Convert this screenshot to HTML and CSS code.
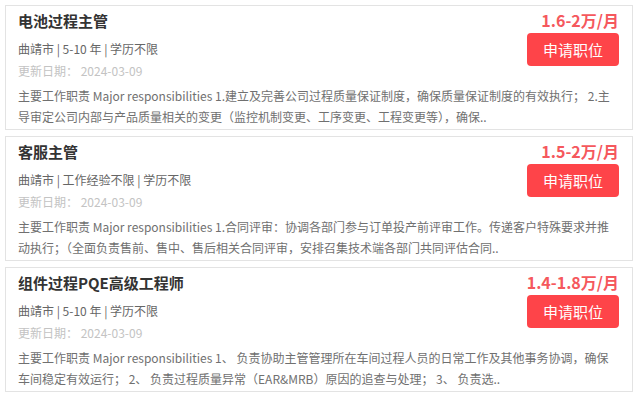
FILE: index.html
```html
<!DOCTYPE html>
<html lang="zh-CN">
<head>
    <meta charset="utf-8">
    <title>职位列表</title>
    <meta name="viewport" content="width=device-width, initial-scale=1.0">
    <link rel="stylesheet" href="styles.css">
</head>

<body>

    <div class="job-list">

        <div class="job-card">
            <div class="job-head">
                <div class="job-info">
                    <div class="job-title">电池过程主管</div>
                    <div class="job-meta">曲靖市 | 5-10 年 | 学历不限</div>
                    <div class="job-date">更新日期： 2024-03-09</div>
                </div>
                <div class="job-side">
                    <div class="job-salary">1.6-2万/月</div>
                    <button class="apply-btn">申请职位</button>
                </div>
            </div>
            <p class="job-desc">主要工作职责 Major responsibilities 1.建立及完善公司过程质量保证制度，确保质量保证制度的有效执行； 2.主导审定公司内部与产品质量相关的变更（监控机制变更、工序变更、工程变更等），确保..</p>
        </div>

        <div class="job-card">
            <div class="job-head">
                <div class="job-info">
                    <div class="job-title">客服主管</div>
                    <div class="job-meta">曲靖市 | 工作经验不限 | 学历不限</div>
                    <div class="job-date">更新日期： 2024-03-09</div>
                </div>
                <div class="job-side">
                    <div class="job-salary">1.5-2万/月</div>
                    <button class="apply-btn">申请职位</button>
                </div>
            </div>
            <p class="job-desc">主要工作职责 Major responsibilities 1.合同评审：协调各部门参与订单投产前评审工作。传递客户特殊要求并推动执行；（全面负责售前、售中、售后相关合同评审，安排召集技术端各部门共同评估合同..</p>
        </div>

        <div class="job-card">
            <div class="job-head">
                <div class="job-info">
                    <div class="job-title">组件过程PQE高级工程师</div>
                    <div class="job-meta">曲靖市 | 5-10 年 | 学历不限</div>
                    <div class="job-date">更新日期： 2024-03-09</div>
                </div>
                <div class="job-side">
                    <div class="job-salary">1.4-1.8万/月</div>
                    <button class="apply-btn">申请职位</button>
                </div>
            </div>
            <p class="job-desc">主要工作职责 Major responsibilities 1、 负责协助主管管理所在车间过程人员的日常工作及其他事务协调，确保车间稳定有效运行； 2、 负责过程质量异常（EAR&amp;MRB）原因的追查与处理； 3、 负责选..</p>
        </div>

    </div>

</body>
</html>
```

FILE: styles.css
```css
body {
    margin: 0;
    padding: 5px 5px 0 5px;
    background-color: #fff;
    font-family: "Noto Sans CJK SC", sans-serif;
}

.job-list {
    display: flex;
    flex-direction: column;
    gap: 6px;
}

.job-card {
    height: 125px;
    box-sizing: border-box;
    padding: 3px 12px 2px 12px;
    border: 1px solid #e3e3e3;
    background-color: #fff;
    overflow: hidden;
}

.job-head {
    display: flex;
    justify-content: space-between;
    align-items: flex-start;
}

.job-title {
    font-size: 15px;
    font-weight: bold;
    line-height: 24px;
    color: #333;
}

.job-meta {
    margin-top: 5px;
    font-size: 12px;
    line-height: 22px;
    color: #666;
}

.job-date {
    font-size: 12px;
    line-height: 22px;
    color: #c3c3c3;
}

.job-side {
    display: flex;
    flex-direction: column;
    align-items: flex-end;
    padding-right: 1px;
}

.job-salary {
    font-size: 16px;
    font-weight: bold;
    line-height: 22px;
    color: #f5585d;
}

.apply-btn {
    margin-top: 2px;
    height: 33px;
    padding: 0 16px;
    font-family: inherit;
    font-size: 15px;
    color: #fff;
    background-color: #fe4449;
    border: none;
    border-radius: 4px;
    cursor: pointer;
}

.job-desc {
    margin: 3px 0 0 0;
    font-size: 12px;
    line-height: 21px;
    color: #707070;
}
```
